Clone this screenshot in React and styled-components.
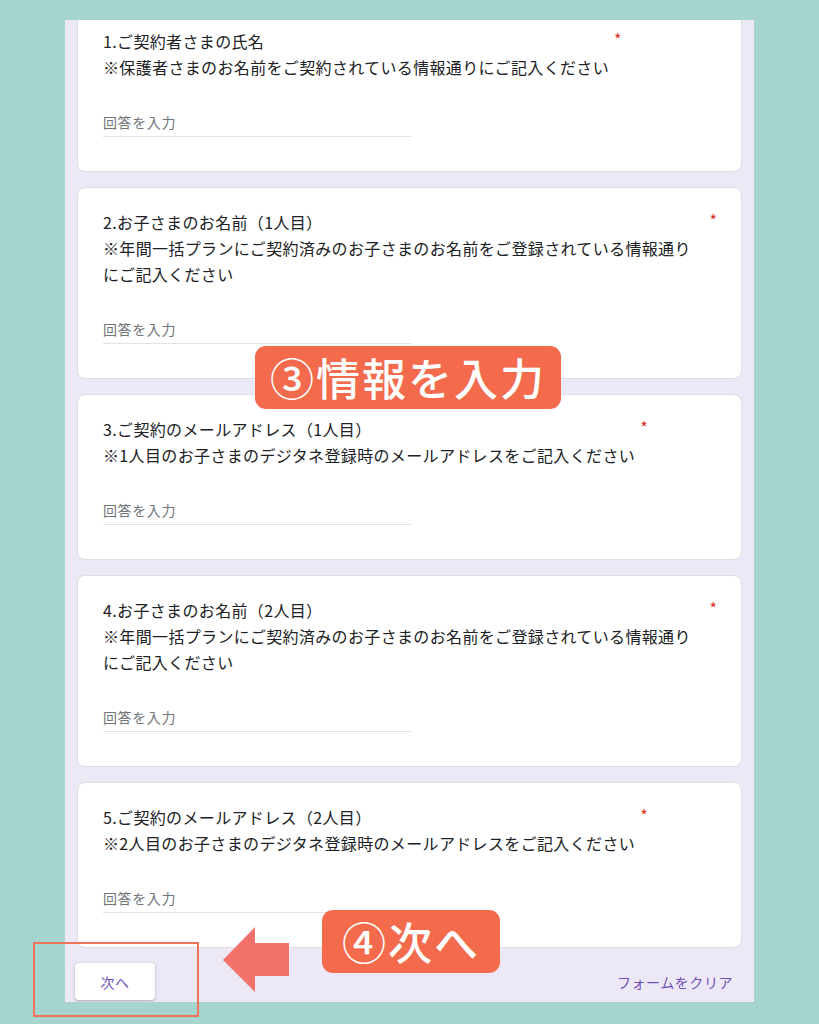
import React from "react";
import styled, { createGlobalStyle } from "styled-components";

const Global = createGlobalStyle`
  html, body { margin: 0; padding: 0; background: #a6d4cf; }
  body { font-family: "Noto Sans CJK JP", "Noto Sans", sans-serif; }
  * { box-sizing: border-box; }
`;

const Page = styled.div`
  position: relative;
  width: 819px;
  height: 1024px;
  padding: 20px 0 0 65px;
  background: #a6d4cf;
  overflow: hidden;
`;

const Panel = styled.div`
  width: 689px;
  height: 982px;
  background: #ede8f6;
  overflow: hidden;
  display: flex;
  flex-direction: column;
`;

const CardList = styled.div`
  margin-top: -14px;
  padding: 0 12px;
  display: flex;
  flex-direction: column;
  gap: 15px;
`;

const Card = styled.div`
  background: #ffffff;
  border: 1px solid #e0dde6;
  border-radius: 8px;
  padding: 21px 24px 34px 25px;
`;

const TitleRow = styled.div`
  display: flex;
  align-items: flex-start;
`;

const Title = styled.div`
  flex: 0 1 auto;
  font-size: 16px;
  line-height: 26px;
  letter-spacing: 0.35px;
  color: #202124;
`;

const Required = styled.span`
  flex: none;
  padding-left: 5px;
  font-size: 16px;
  line-height: 22px;
  color: #d93025;
`;

const Input = styled.div`
  margin-top: 28px;
  width: 308px;
  height: 29px;
  border-bottom: 1px solid #e2e2e6;
  font-size: 14px;
  line-height: 28px;
  letter-spacing: 0.6px;
  color: #70757a;
`;

const Footer = styled.div`
  margin-top: 15px;
  padding: 0 21px 0 10px;
  display: flex;
  align-items: center;
  justify-content: space-between;
`;

const NextButton = styled.div`
  width: 80px;
  height: 37px;
  background: #ffffff;
  border-radius: 4px;
  box-shadow: 0 1px 2px rgba(60, 64, 67, 0.25), 0 1px 3px 1px rgba(60, 64, 67, 0.1);
  display: flex;
  align-items: center;
  justify-content: center;
  font-size: 14px;
  letter-spacing: 0.5px;
  color: #6f4fbb;
`;

const ClearLink = styled.div`
  font-size: 14px;
  letter-spacing: 0.55px;
  color: #6f4fbb;
`;

const Label = styled.div`
  position: absolute;
  left: ${(p) => p.$x}px;
  top: ${(p) => p.$y}px;
  height: 63px;
  padding: 0 ${(p) => p.$pad}px;
  background: #f36b4c;
  border-radius: 11px;
  color: #ffffff;
  font-size: 44px;
  font-weight: 500;
  line-height: 63px;
  letter-spacing: 2px;
  white-space: nowrap;
`;

const Arrow = styled.svg`
  position: absolute;
  left: 223px;
  top: 927px;
`;

const Highlight = styled.div`
  position: absolute;
  left: 33px;
  top: 942px;
  width: 166px;
  height: 75px;
  border: 2px solid #ef7358;
`;

const questions = [
  {
    title: "1.ご契約者さまの氏名",
    note: "※保護者さまのお名前をご契約されている情報通りにご記入ください",
  },
  {
    title: "2.お子さまのお名前（1人目）",
    note: "※年間一括プランにご契約済みのお子さまのお名前をご登録されている情報通りにご記入ください",
  },
  {
    title: "3.ご契約のメールアドレス（1人目）",
    note: "※1人目のお子さまのデジタネ登録時のメールアドレスをご記入ください",
  },
  {
    title: "4.お子さまのお名前（2人目）",
    note: "※年間一括プランにご契約済みのお子さまのお名前をご登録されている情報通りにご記入ください",
  },
  {
    title: "5.ご契約のメールアドレス（2人目）",
    note: "※2人目のお子さまのデジタネ登録時のメールアドレスをご記入ください",
  },
];

export default function App() {
  return (
    <>
      <Global />
      <Page>
        <Panel>
          <CardList>
            {questions.map((q) => (
              <Card key={q.title}>
                <TitleRow>
                  <Title>
                    {q.title}
                    <br />
                    {q.note}
                  </Title>
                  <Required>*</Required>
                </TitleRow>
                <Input>回答を入力</Input>
              </Card>
            ))}
          </CardList>
          <Footer>
            <NextButton>次へ</NextButton>
            <ClearLink>フォームをクリア</ClearLink>
          </Footer>
        </Panel>

        <Label $x={255} $y={346} $pad={15}>③情報を入力</Label>
        <Label $x={322} $y={910} $pad={20}>④次へ</Label>
        <Arrow width="67" height="66" viewBox="0 0 67 66">
          <polygon
            points="0,33 32,0 32,16 66,16 66,49 32,49 32,65"
            fill="#f2716b"
          />
        </Arrow>
        <Highlight />
      </Page>
    </>
  );
}
